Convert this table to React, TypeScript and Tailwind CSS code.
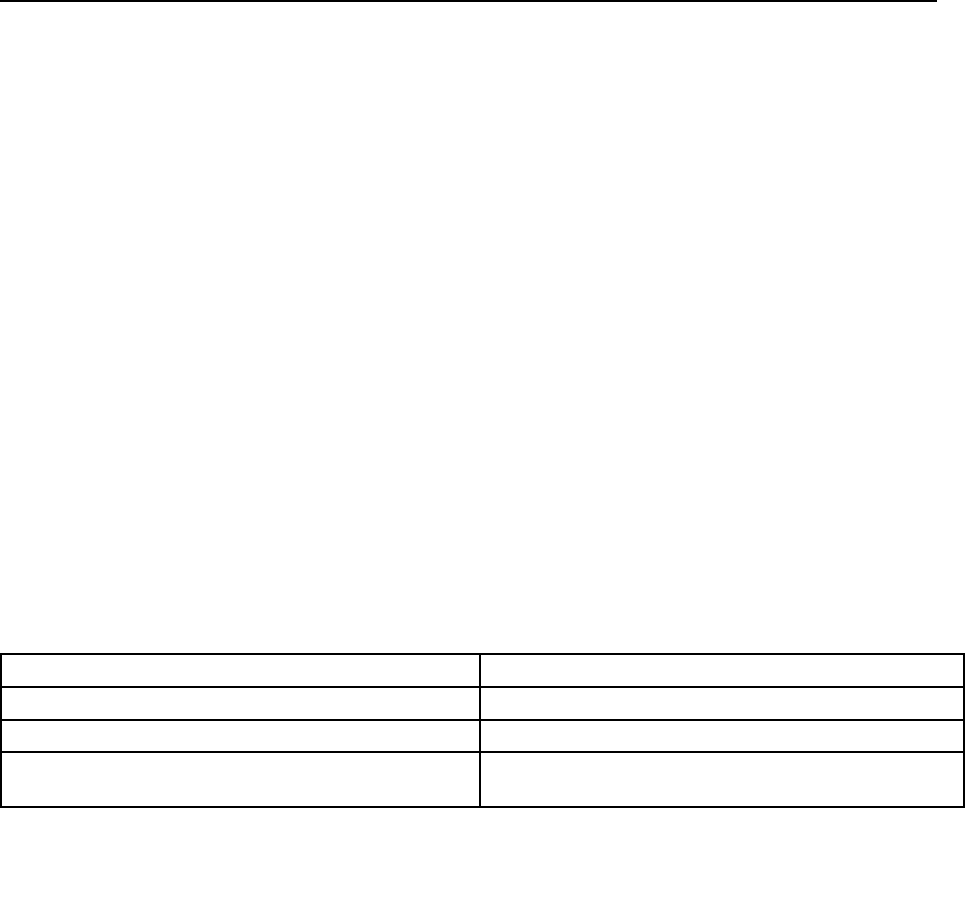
export default function App() {
  const rows = [33, 33, 32, 53];
  return (
    <div className="w-[965px] h-[906px] bg-white" style={{ fontFamily: '"Liberation Sans", Arial, sans-serif' }}>
      <div className="w-[937px] h-[2px] bg-black" />
      <div className="mt-[651px] w-[965px] border-2 border-black flex flex-col">
        {rows.map((h, i) => (
          <div
            key={i}
            className={`flex ${i < rows.length - 1 ? "border-b-2 border-black" : ""}`}
            style={{ height: h }}
          >
            <div className="w-[479px] border-r-2 border-black" />
            <div className="flex-1" />
          </div>
        ))}
      </div>
    </div>
  );
}
